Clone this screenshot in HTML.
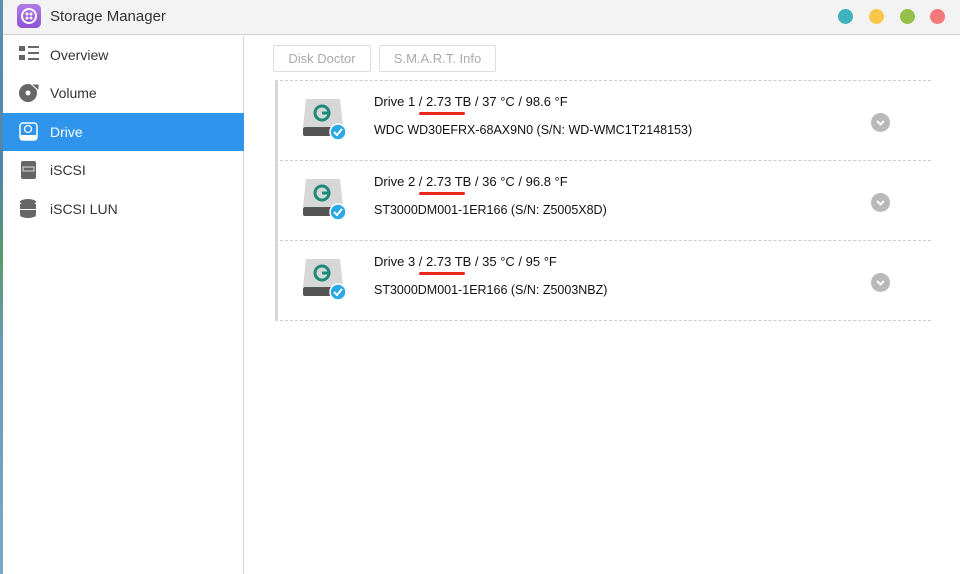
<!DOCTYPE html>
<html><head><style>
*{margin:0;padding:0;box-sizing:border-box}
body{width:960px;height:574px;overflow:hidden;background:#fff;font-family:"Liberation Sans",sans-serif;position:relative;color:#222}
.strip{position:absolute;left:0;top:0;width:3px;height:574px;background:linear-gradient(#5a8fb0,#4f86a8 30%,#5a9a6a 45%,#6a9ab8 60%,#7aa8c8)}
.title{position:absolute;left:3px;top:0;right:0;height:35px;background:#f3f3f3;border-bottom:1px solid #cfcfcf}
.title .t{position:absolute;left:47px;top:8px;font-size:15px;color:#333}
.logo{position:absolute;left:14px;top:4px;width:24px;height:24px;border-radius:5px;background:linear-gradient(#b07ae8,#8f52d8)}
.dot{position:absolute;top:9px;width:15px;height:15px;border-radius:50%}
.side{position:absolute;left:3px;top:36px;width:241px;height:538px;border-right:1px solid #d6d6d6}
.item{position:absolute;left:0;width:241px;height:38px;font-size:14px;color:#333}
.item span{position:absolute;left:47px;top:11px}
.item svg{position:absolute;left:15px;top:8px}
.sel{background:#2f95ec;color:#fff}
.btn{position:absolute;top:45px;height:27px;border:1px solid #ddd;border-radius:2px;font-size:13px;color:#aaa;text-align:center;line-height:25px}
.row{position:absolute;left:275px;width:656px;height:80px;border-top:1px dashed #ccc}
.row .bar{position:absolute;left:0;top:0;width:3px;height:80px;background:#d8d8d8}
.l1{position:absolute;left:99px;top:13px;font-size:13px;color:#111}
.l2{position:absolute;left:99px;top:42px;font-size:12.5px;color:#111}
.ul{position:absolute;left:144px;top:31px;width:46px;height:3px;background:#e8261c;border-radius:2px}
.chev{position:absolute;left:596px;top:32px;width:19px;height:19px;border-radius:50%;background:#b9b9b9}
.hdd{position:absolute;left:28px;top:16px}
</style></head><body>
<div class="strip"></div>
<div class="title"><div class="logo"><svg width="24" height="24"><circle cx="12" cy="12" r="7" fill="none" stroke="#fff" stroke-width="2"/><circle cx="10" cy="10" r="1.5" fill="#fff"/><circle cx="14" cy="10" r="1.5" fill="#fff"/><circle cx="10" cy="14" r="1.5" fill="#fff"/><circle cx="14" cy="14" r="1.5" fill="#fff"/></svg></div><div class="t">Storage Manager</div>
<div class="dot" style="left:835px;background:#3fb3bd"></div><div class="dot" style="left:866px;background:#f7c64a"></div><div class="dot" style="left:897px;background:#95c047"></div><div class="dot" style="left:927px;background:#f27a7a"></div></div>
<div class="side">
<div class="item" style="top:0"><svg width="22" height="20"><rect x="1" y="2" width="6" height="5" fill="#666"/><rect x="1" y="11" width="6" height="5" fill="#666"/><rect x="10" y="2" width="11" height="2" fill="#666"/><rect x="10" y="8" width="11" height="2" fill="#666"/><rect x="10" y="14" width="11" height="2" fill="#666"/></svg><span>Overview</span></div>
<div class="item" style="top:38px"><svg width="22" height="22"><circle cx="10" cy="11" r="9" fill="#666"/><circle cx="10" cy="11" r="2.5" fill="#fff"/><path d="M13 2 L21 2 L21 9 Z" fill="#666" stroke="#fff"/></svg><span>Volume</span></div>
<div class="item sel" style="top:77px"><svg width="22" height="22"><rect x="2" y="2" width="17" height="17" rx="3" fill="none" stroke="#fff" stroke-width="1.5"/><rect x="2" y="14" width="17" height="5" fill="#fff"/><circle cx="10" cy="8" r="3.5" fill="none" stroke="#fff" stroke-width="1.3"/></svg><span>Drive</span></div>
<div class="item" style="top:115px"><svg width="22" height="22"><rect x="3" y="2" width="15" height="18" rx="2" fill="#666"/><rect x="5" y="8" width="11" height="4" fill="none" stroke="#ddd"/></svg><span>iSCSI</span></div>
<div class="item" style="top:154px"><svg width="22" height="22"><ellipse cx="10" cy="4" rx="8" ry="3" fill="#666"/><rect x="2" y="6" width="16" height="5" fill="#666"/><rect x="2" y="12" width="16" height="4" fill="#666"/><ellipse cx="10" cy="17" rx="8" ry="3" fill="#666"/></svg><span>iSCSI LUN</span></div>
</div>
<div class="btn" style="left:273px;width:98px">Disk Doctor</div>
<div class="btn" style="left:379px;width:117px">S.M.A.R.T. Info</div>
<svg width="0" height="0" style="position:absolute"><defs><g id="h"><path d="M3 2 H37 L40 30 H0 Z" fill="#d7d7d7"/><rect x="0" y="30" width="40" height="9" rx="2" fill="#555"/><circle cx="19" cy="16" r="7" fill="none" stroke="#1c8a78" stroke-width="3"/><path d="M19 16 H27" stroke="#1c8a78" stroke-width="3"/><circle cx="35" cy="35" r="8" fill="#2aa9e6" stroke="#fff" stroke-width="1.5"/><path d="M31 35 L34 38 L39 32" fill="none" stroke="#fff" stroke-width="2"/></g></defs></svg>
<div class="row" style="top:80px"><div class="bar"></div><svg class="hdd" width="46" height="46"><use href="#h"/></svg><div class="l1">Drive 1 / 2.73 TB / 37 °C / 98.6 °F</div><div class="ul"></div><div class="l2">WDC WD30EFRX-68AX9N0 (S/N: WD-WMC1T2148153)</div><div class="chev"><svg width="19" height="19"><path d="M6 8 L9.5 11.5 L13 8" fill="none" stroke="#fff" stroke-width="2"/></svg></div></div>
<div class="row" style="top:160px"><div class="bar"></div><svg class="hdd" width="46" height="46"><use href="#h"/></svg><div class="l1">Drive 2 / 2.73 TB / 36 °C / 96.8 °F</div><div class="ul"></div><div class="l2">ST3000DM001-1ER166 (S/N: Z5005X8D)</div><div class="chev"><svg width="19" height="19"><path d="M6 8 L9.5 11.5 L13 8" fill="none" stroke="#fff" stroke-width="2"/></svg></div></div>
<div class="row" style="top:240px;border-bottom:1px dashed #ccc;height:81px"><div class="bar"></div><svg class="hdd" width="46" height="46"><use href="#h"/></svg><div class="l1">Drive 3 / 2.73 TB / 35 °C / 95 °F</div><div class="ul"></div><div class="l2">ST3000DM001-1ER166 (S/N: Z5003NBZ)</div><div class="chev"><svg width="19" height="19"><path d="M6 8 L9.5 11.5 L13 8" fill="none" stroke="#fff" stroke-width="2"/></svg></div></div>
</body></html>
